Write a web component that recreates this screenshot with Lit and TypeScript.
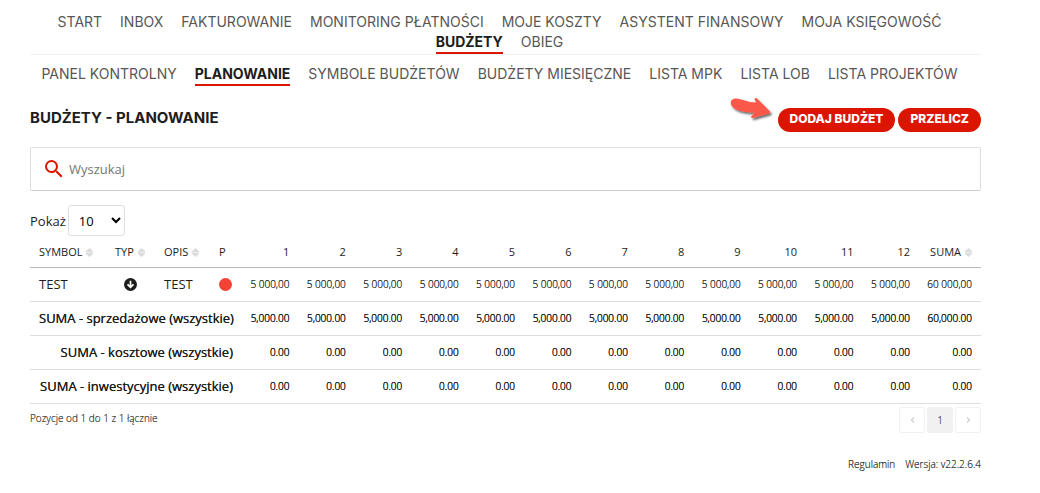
import { LitElement, html, css, svg } from "lit";
import { customElement } from "lit/decorators.js";
import { classMap } from "lit/directives/class-map.js";

const MAIN_NAV = [
  "START", "INBOX", "FAKTUROWANIE", "MONITORING PŁATNOŚCI", "MOJE KOSZTY",
  "ASYSTENT FINANSOWY", "MOJA KSIĘGOWOŚĆ", "BUDŻETY", "OBIEG",
];
const SUB_NAV = [
  "PANEL KONTROLNY", "PLANOWANIE", "SYMBOLE BUDŻETÓW", "BUDŻETY MIESIĘCZNE",
  "LISTA MPK", "LISTA LOB", "LISTA PROJEKTÓW",
];
const MONTHS = Array.from({ length: 12 }, (_, i) => i + 1);
const TOTALS = [
  { label: "SUMA - sprzedażowe (wszystkie)", month: "5,000.00", sum: "60,000.00" },
  { label: "SUMA - kosztowe (wszystkie)", month: "0.00", sum: "0.00" },
  { label: "SUMA - inwestycyjne (wszystkie)", month: "0.00", sum: "0.00" },
];

const sortIcon = html`<svg class="sort" viewBox="0 0 7 9" aria-hidden="true">
  ${svg`<path d="M3.5 0 7 3v1.200H0V3zM3.500 9 0 6V4.800h7V6z" fill="#dcdcdc"/>`}
</svg>`;

@customElement("app-root")
export class AppRoot extends LitElement {
  static styles = css`
    :host {
      display: block;
      box-sizing: border-box;
      padding: 12px 59px 20px 30px;
      background: #fff;
      color: #1d1d1b;
      font-family: "Open Sans", sans-serif;
      font-size: 13px;
    }
    * { box-sizing: border-box; }
    .nav {
      display: flex;
      flex-wrap: wrap;
      justify-content: center;
      column-gap: 18px;
      padding-right: 12px;
      font-family: Inter, sans-serif;
      font-size: 14px;
      line-height: 20px;
    }
    .main { border-bottom: 1px solid #f1f1f1; padding-bottom: 2px; }
    .sub { padding-top: 9px; }
    .nav a { color: #575756; text-decoration: none; font-weight: 400; }
    .nav a.active {
      color: #1d1d1b;
      font-weight: 700;
      box-shadow: 0 2px #dc1500;
    }
    .heading {
      display: flex;
      justify-content: space-between;
      align-items: center;
      margin-top: 24px;
    }
    h1 {
      margin: 0 0 4px;
      font: 700 15px/20px Inter, sans-serif;
    }
    .actions { display: flex; gap: 3px; position: relative; }
    .actions button {
      height: 24px;
      padding: 0 12px 2px;
      border: 0;
      border-radius: 12px;
      background: #dc1500;
      color: #fff;
      font: 800 12px/20px Inter, sans-serif;
    }
    .pointer {
      position: absolute;
      right: 100%;
      top: -14px;
      width: 50px;
      height: 32px;
      overflow: visible;
    }
    .search {
      display: flex;
      align-items: center;
      gap: 6px;
      height: 44px;
      margin-top: 15px;
      padding: 0 14px;
      border: 1px solid #dedede;
      border-bottom-color: #cfcfcf;
      border-radius: 2px;
    }
    .search svg { width: 18px; height: 18px; }
    .search input {
      flex: 1;
      border: 0;
      outline: 0;
      padding: 0;
      background: none;
      font: inherit;
    }
    .search input::placeholder { color: #757575; }
    .length { display: flex; align-items: center; gap: 2px; margin-top: 14px; }
    .length select {
      width: 57px;
      height: 31px;
      padding: 0 0 0 6px;
      border: 1px solid #dedede;
      border-radius: 3px;
      background: #fff;
      color: #000;
      font: inherit;
    }
    table {
      width: 100%;
      table-layout: fixed;
      border-collapse: collapse;
    }
    .c-symbol { width: 76px; }
    .c-type { width: 49px; }
    .c-desc { width: 55px; }
    .c-p { width: 32px; }
    .c-sum { width: 62px; }
    th, td {
      height: 34px;
      padding: 0 9px;
      border-bottom: 1px solid #dedede;
      text-align: left;
      white-space: nowrap;
      font-weight: 400;
    }
    thead th {
      height: 31px;
      border-color: #b9b9b9;
      font-size: 11px;
    }
    .num { text-align: right; padding-left: 0; }
    td.num { font-size: 10px; font-weight: 300; text-shadow: 0 0 0 #1d1d1b; }
    .sort { width: 7px; height: 9px; margin-left: 4px; vertical-align: -1px; }
    .type { display: block; width: 13px; height: 13px; margin: 0 auto; }
    .status {
      display: block;
      width: 13px;
      height: 13px;
      border-radius: 50%;
      background: #f44336;
    }
    .total th { text-align: right; text-shadow: 0 0 0 #1d1d1b; }
    .total td.num { text-shadow: 0 0 0 #1d1d1b, 0 0 0 #1d1d1b; }
    .below {
      display: flex;
      justify-content: space-between;
      align-items: center;
      margin-top: 3px;
      font-size: 10px;
      font-weight: 300;
      color: #3c3c3b;
    }
    .below p { margin: 0 0 3px; text-shadow: 0 0 0 #575756; }
    .pages { display: flex; gap: 2px; }
    .pages button {
      display: grid;
      place-items: center;
      width: 26px;
      height: 26px;
      padding: 0;
      border: 1px solid #f1f1f1;
      border-radius: 2px;
      background: #fff;
      color: #575756;
      font: inherit;
      font-weight: 400;
    }
    .pages .current { background: #f1f1f1; }
    .pages svg { width: 5px; height: 6px; }
    footer {
      display: flex;
      justify-content: flex-end;
      gap: 10px;
      margin-top: 24px;
      font-size: 10px;
      font-weight: 300;
      line-height: 14px;
      color: #3c3c3b;
      text-shadow: 0 0 0 #3c3c3b;
    }
    footer a { color: inherit; text-decoration: none; }
  `;

  private nav(items: string[], active: string, kind: string, label: string) {
    return html`<nav class="nav ${kind}" aria-label=${label}>
      ${items.map((t) => html`<a href="#" class=${classMap({ active: t === active })}>${t}</a>`)}
    </nav>`;
  }

  render() {
    return html`
      ${this.nav(MAIN_NAV, "BUDŻETY", "main", "Menu")}
      ${this.nav(SUB_NAV, "PLANOWANIE", "sub", "Budżety")}
      <div class="heading">
        <h1>BUDŻETY - PLANOWANIE</h1>
        <div class="actions">
          <svg class="pointer" viewBox="0 0 50 32" aria-hidden="true">
            <defs>
              <filter id="shade" x="-20%" y="-20%" width="150%" height="160%">
                <feDropShadow dx="1.5" dy="2" stdDeviation="1" flood-opacity="0.6" />
              </filter>
            </defs>
            <path filter="url(#shade)" fill="#fb5948"
              d="M7 4.500C13 4 19 8.500 28 8.500L26.500 5Q27 3.500 29 4.500L42 17.500Q43 19 41 19.500L25 24Q22 24 23.500 22L27 18.500C19 18.500 11 17.500 6 14C1 10.500 2 5 7 4.500Z" />
          </svg>
          <button type="button">DODAJ BUDŻET</button>
          <button type="button">PRZELICZ</button>
        </div>
      </div>
      <div class="search">
        <svg viewBox="3 3 18 18" aria-hidden="true">
          <path fill="#dc1500" d="M15.500 14h-.79l-.28-.27A6.470 6.470 0 0 0 16 9.500 6.500 6.500 0 1 0 9.500 16c1.610 0 3.090-.59 4.230-1.570l.27.28v.79l5 4.990L20.490 19l-4.990-5zm-6 0C7.010 14 5 11.990 5 9.500S7.010 5 9.500 5 14 7.010 14 9.500 11.990 14 9.500 14z" />
        </svg>
        <input type="text" placeholder="Wyszukaj" aria-label="Wyszukaj" />
      </div>
      <div class="length">
        <label for="length">Pokaż</label>
        <select id="length"><option>10</option><option>25</option><option>50</option></select>
      </div>
      <table>
        <colgroup>
          <col class="c-symbol" /><col class="c-type" /><col class="c-desc" /><col class="c-p" />
          ${MONTHS.map(() => html`<col />`)}
          <col class="c-sum" />
        </colgroup>
        <thead>
          <tr>
            <th>SYMBOL${sortIcon}</th>
            <th>TYP${sortIcon}</th>
            <th>OPIS${sortIcon}</th>
            <th>P</th>
            ${MONTHS.map((m) => html`<th class="num">${m}</th>`)}
            <th class="num">SUMA${sortIcon}</th>
          </tr>
        </thead>
        <tbody>
          <tr>
            <td>TEST</td>
            <td>
              <svg class="type" viewBox="0 0 13 13" aria-hidden="true">
                <circle cx="6.500" cy="6.500" r="6.500" fill="#1d1d1b" />
                <path d="M6.500 2.800v6M3.500 6.300l3 3 3-3" fill="none" stroke="#fff" stroke-width="1.700" />
              </svg>
            </td>
            <td>TEST</td>
            <td><span class="status"></span></td>
            ${MONTHS.map(() => html`<td class="num">5 000,00</td>`)}
            <td class="num">60 000,00</td>
          </tr>
        </tbody>
        <tfoot>
          ${TOTALS.map((t) => html`<tr class="total">
            <th colspan="4" scope="row">${t.label}</th>
            ${MONTHS.map(() => html`<td class="num">${t.month}</td>`)}
            <td class="num">${t.sum}</td>
          </tr>`)}
        </tfoot>
      </table>
      <div class="below">
        <p>Pozycje od 1 do 1 z 1 łącznie</p>
        <div class="pages">
          <button type="button" aria-label="Poprzednia">
            <svg viewBox="0 0 5 6"><path d="M4 .5 1.500 3 4 5.500" fill="none" stroke="#d4d4d4" stroke-width="1.500" /></svg>
          </button>
          <button type="button" class="current">1</button>
          <button type="button" aria-label="Następna">
            <svg viewBox="0 0 5 6"><path d="M1 .5 3.500 3 1 5.500" fill="none" stroke="#d4d4d4" stroke-width="1.500" /></svg>
          </button>
        </div>
      </div>
      <footer>
        <a href="#">Regulamin</a>
        <span>Wersja: v22.2.6.4</span>
      </footer>
    `;
  }
}
